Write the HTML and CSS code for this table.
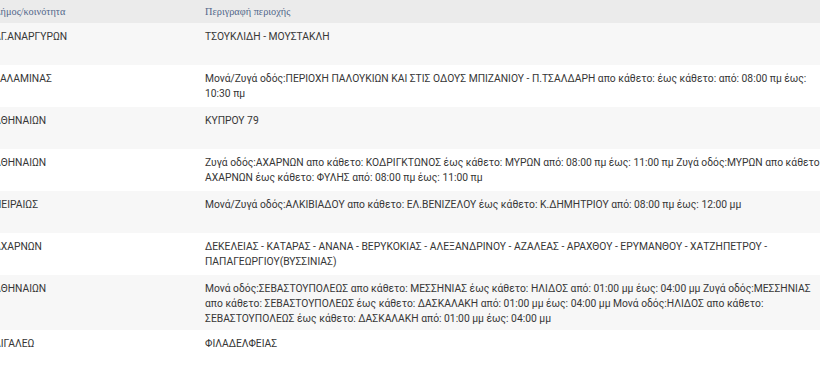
FILE: index.html
```html
<!DOCTYPE html>
<html lang="el">
<head>
<meta charset="utf-8">
<link rel="stylesheet" href="styles.css">
</head>
<body>
<table class="areas">
  <thead>
    <tr><th class="c-muni">Δήμος/κοινότητα</th><th class="c-desc">Περιγραφή περιοχής</th></tr>
  </thead>
  <tbody>
    <tr><td>ΑΓ.ΑΝΑΡΓΥΡΩΝ</td><td>ΤΣΟΥΚΛΙΔΗ - ΜΟΥΣΤΑΚΛΗ</td></tr>
    <tr><td>ΣΑΛΑΜΙΝΑΣ</td><td>Μονά/Ζυγά οδός:ΠΕΡΙΟΧΗ ΠΑΛΟΥΚΙΩΝ ΚΑΙ ΣΤΙΣ ΟΔΟΥΣ ΜΠΙΖΑΝΙΟΥ - Π.ΤΣΑΛΔΑΡΗ απο κάθετο: έως κάθετο: από: 08:00 πμ έως: 10:30 πμ</td></tr>
    <tr><td>ΑΘΗΝΑΙΩΝ</td><td>ΚΥΠΡΟΥ 79</td></tr>
    <tr><td>ΑΘΗΝΑΙΩΝ</td><td>Ζυγά οδός:ΑΧΑΡΝΩΝ απο κάθετο: ΚΟΔΡΙΓΚΤΩΝΟΣ έως κάθετο: ΜΥΡΩΝ από: 08:00 πμ έως: 11:00 πμ Ζυγά οδός:ΜΥΡΩΝ απο κάθετο: ΑΧΑΡΝΩΝ έως κάθετο: ΦΥΛΗΣ από: 08:00 πμ έως: 11:00 πμ</td></tr>
    <tr><td>ΠΕΙΡΑΙΩΣ</td><td>Μονά/Ζυγά οδός:ΑΛΚΙΒΙΑΔΟΥ απο κάθετο: ΕΛ.ΒΕΝΙΖΕΛΟΥ έως κάθετο: Κ.ΔΗΜΗΤΡΙΟΥ από: 08:00 πμ έως: 12:00 μμ</td></tr>
    <tr><td>ΑΧΑΡΝΩΝ</td><td>ΔΕΚΕΛΕΙΑΣ - ΚΑΤΑΡΑΣ - ΑΝΑΝΑ - ΒΕΡΥΚΟΚΙΑΣ - ΑΛΕΞΑΝΔΡΙΝΟΥ - ΑΖΑΛΕΑΣ - ΑΡΑΧΘΟΥ - ΕΡΥΜΑΝΘΟΥ - ΧΑΤΖΗΠΕΤΡΟΥ - ΠΑΠΑΓΕΩΡΓΙΟΥ(ΒΥΣΣΙΝΙΑΣ)</td></tr>
    <tr><td>ΑΘΗΝΑΙΩΝ</td><td>Μονά οδός:ΣΕΒΑΣΤΟΥΠΟΛΕΩΣ απο κάθετο: ΜΕΣΣΗΝΙΑΣ έως κάθετο: ΗΛΙΔΟΣ από: 01:00 μμ έως: 04:00 μμ Ζυγά οδός:ΜΕΣΣΗΝΙΑΣ απο κάθετο: ΣΕΒΑΣΤΟΥΠΟΛΕΩΣ έως κάθετο: ΔΑΣΚΑΛΑΚΗ από: 01:00 μμ έως: 04:00 μμ Μονά οδός:ΗΛΙΔΟΣ απο κάθετο: ΣΕΒΑΣΤΟΥΠΟΛΕΩΣ έως κάθετο: ΔΑΣΚΑΛΑΚΗ από: 01:00 μμ έως: 04:00 μμ</td></tr>
    <tr><td>ΑΙΓΑΛΕΩ</td><td>ΦΙΛΑΔΕΛΦΕΙΑΣ</td></tr>
  </tbody>
</table>
</body>
</html>
```
FILE: styles.css
```css
html, body {
  margin: 0;
  padding: 0;
  background: #ffffff;
  overflow: hidden;
}
.areas {
  border-collapse: collapse;
  margin-left: -14px;
  width: 846px;
  table-layout: fixed;
  font-family: Roboto, "Noto Sans", sans-serif;
  font-size: 10.3px;
  color: #363636;
}
.areas th {
  background: #ebebeb;
  font-family: "Liberation Serif", "DejaVu Serif", serif;
  font-weight: normal;
  font-size: 10.3px;
  color: #52678a;
  text-align: left;
  height: 23px;
  padding: 0 8px;
  vertical-align: middle;
}
.c-muni { width: 195px; }
.areas td {
  padding: 6px 8px 4px;
  line-height: 15px;
  height: 32px;
  vertical-align: top;
}
.areas tbody tr:nth-child(odd) td { background: #f7f7f7; }
.areas tbody tr:nth-child(even) td { background: #ffffff; }
```
